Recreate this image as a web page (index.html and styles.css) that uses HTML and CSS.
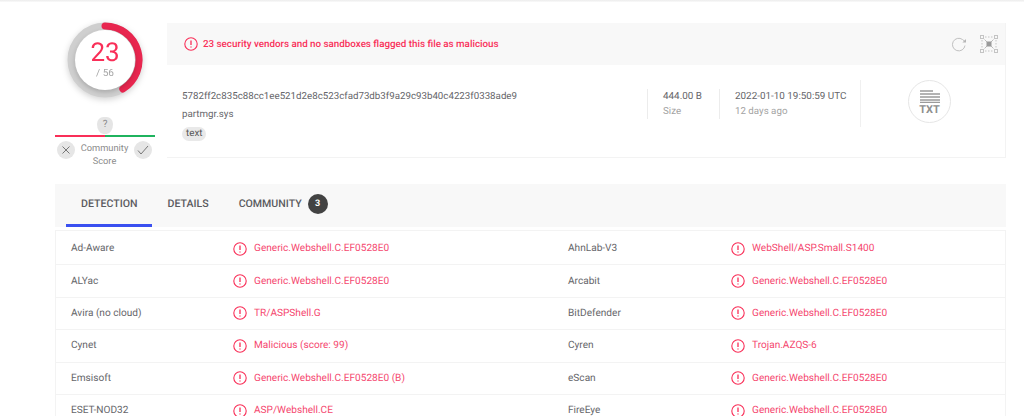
FILE: index.html
```html
<!DOCTYPE html>
<html lang="en">
<head>
<meta charset="utf-8">
<title>Detection report</title>
<link rel="stylesheet" href="styles.css">
</head>
<body>
<div class="topline"></div>
<main class="page">
  <section class="summary">
    <aside class="score-col">
      <div class="gauge">
        <svg class="gauge-ring" width="76" height="76" viewBox="0 0 76 76">
          <circle cx="38" cy="38" r="34" fill="none" stroke="#cfcfcf" stroke-width="7"/>
          <path d="M38 4A34 34 0 0 1 55.8 67" fill="none" stroke="#e8264f" stroke-width="7" stroke-linecap="round"/>
        </svg>
        <div class="gauge-face">
          <span class="gauge-num">23</span>
          <span class="gauge-total">/ 56</span>
        </div>
      </div>
      <div class="pin">?</div>
      <div class="score-line"></div>
      <div class="community">
        <span class="vote"><svg width="10" height="10" viewBox="0 0 10 10"><path d="M1.5 1.5l7 7M8.5 1.5l-7 7" stroke="#777" stroke-width="1" fill="none"/></svg></span>
        <span class="community-label">Community<br>Score</span>
        <span class="vote"><svg width="12" height="10" viewBox="0 0 12 10"><path d="M1 5.5l3 3.5 7-8" stroke="#777" stroke-width="1" fill="none"/></svg></span>
      </div>
    </aside>
    <div class="card">
      <div class="banner">
        <svg class="alert" width="14" height="14" viewBox="0 0 14 14"><circle cx="7" cy="7" r="6.2" fill="none" stroke="#f92f58" stroke-width="1.1"/><path d="M7 3.5v4.4M7 9.4v1.2" stroke="#f92f58" stroke-width="1.3" fill="none"/></svg>
        <span class="banner-text">23 security vendors and no sandboxes flagged this file as malicious</span>
        <span class="banner-tools">
          <svg width="16" height="16" viewBox="0 0 16 16"><path d="M14 9.5A6.3 6.3 0 1 1 11.5 3.5l2.5 2" fill="none" stroke="#c0c0c0" stroke-width="1"/><path d="M15 3v3.6h-3.6z" fill="#b5b5b5"/></svg>
          <svg width="18" height="18" viewBox="0 0 18 18"><g fill="none" stroke="#c4c4c4" stroke-width="1"><rect x="0.5" y="0.5" width="3" height="3"/><rect x="14.5" y="0.5" width="3" height="3"/><rect x="0.5" y="14.5" width="3" height="3"/><rect x="14.5" y="14.5" width="3" height="3"/><path d="M5 2h8M5 16h8M2 5v8M16 5v8" stroke-dasharray="1.5 1.5"/></g><path d="M4.5 4.5l9 9M13.5 4.5l-9 9" stroke="#bdbdbd" stroke-width="1"/><rect x="6.5" y="6.5" width="5" height="5" fill="#9a9a9a"/></svg>
        </span>
      </div>
      <div class="file-info">
        <div class="file-main">
          <div class="hash">5782ff2c835c88cc1ee521d2e8c523cfad73db3f9a29c93b40c4223f0338ade9</div>
          <div class="filename">partmgr.sys</div>
          <span class="tag">text</span>
        </div>
        <div class="meta meta-size">
          <div class="meta-value">444.00 B</div>
          <div class="meta-label">Size</div>
        </div>
        <div class="meta meta-date">
          <div class="meta-value">2022-01-10 19:50:59 UTC</div>
          <div class="meta-label">12 days ago</div>
        </div>
        <div class="filetype">
          <div class="type-circle">
            <svg width="20" height="13" viewBox="0 0 20 13"><path d="M0 1h13M0 4h20M0 7h20M0 10h20M0 12.5h20" stroke="#9b9b9b" stroke-width="1.6" fill="none"/></svg>
            <span class="type-label">TXT</span>
          </div>
        </div>
      </div>
    </div>
  </section>

  <nav class="tabs">
    <a class="tab tab-active">DETECTION</a>
    <a class="tab">DETAILS</a>
    <a class="tab">COMMUNITY<span class="badge">3</span></a>
  </nav>

  <section class="results">
    <div class="row">
      <div class="vendor">Ad-Aware</div>
      <div class="verdict"><svg class="alert" width="14" height="14" viewBox="0 0 14 14"><circle cx="7" cy="7" r="6.2" fill="none" stroke="#f92f58" stroke-width="1.1"/><path d="M7 3.5v4.4M7 9.4v1.2" stroke="#f92f58" stroke-width="1.3" fill="none"/></svg>Generic.Webshell.C.EF0528E0</div>
      <div class="vendor">AhnLab-V3</div>
      <div class="verdict"><svg class="alert" width="14" height="14" viewBox="0 0 14 14"><circle cx="7" cy="7" r="6.2" fill="none" stroke="#f92f58" stroke-width="1.1"/><path d="M7 3.5v4.4M7 9.4v1.2" stroke="#f92f58" stroke-width="1.3" fill="none"/></svg>WebShell/ASP.Small.S1400</div>
    </div>
    <div class="row">
      <div class="vendor">ALYac</div>
      <div class="verdict"><svg class="alert" width="14" height="14" viewBox="0 0 14 14"><circle cx="7" cy="7" r="6.2" fill="none" stroke="#f92f58" stroke-width="1.1"/><path d="M7 3.5v4.4M7 9.4v1.2" stroke="#f92f58" stroke-width="1.3" fill="none"/></svg>Generic.Webshell.C.EF0528E0</div>
      <div class="vendor">Arcabit</div>
      <div class="verdict"><svg class="alert" width="14" height="14" viewBox="0 0 14 14"><circle cx="7" cy="7" r="6.2" fill="none" stroke="#f92f58" stroke-width="1.1"/><path d="M7 3.5v4.4M7 9.4v1.2" stroke="#f92f58" stroke-width="1.3" fill="none"/></svg>Generic.Webshell.C.EF0528E0</div>
    </div>
    <div class="row">
      <div class="vendor">Avira (no cloud)</div>
      <div class="verdict"><svg class="alert" width="14" height="14" viewBox="0 0 14 14"><circle cx="7" cy="7" r="6.2" fill="none" stroke="#f92f58" stroke-width="1.1"/><path d="M7 3.5v4.4M7 9.4v1.2" stroke="#f92f58" stroke-width="1.3" fill="none"/></svg>TR/ASPShell.G</div>
      <div class="vendor">BitDefender</div>
      <div class="verdict"><svg class="alert" width="14" height="14" viewBox="0 0 14 14"><circle cx="7" cy="7" r="6.2" fill="none" stroke="#f92f58" stroke-width="1.1"/><path d="M7 3.5v4.4M7 9.4v1.2" stroke="#f92f58" stroke-width="1.3" fill="none"/></svg>Generic.Webshell.C.EF0528E0</div>
    </div>
    <div class="row">
      <div class="vendor">Cynet</div>
      <div class="verdict"><svg class="alert" width="14" height="14" viewBox="0 0 14 14"><circle cx="7" cy="7" r="6.2" fill="none" stroke="#f92f58" stroke-width="1.1"/><path d="M7 3.5v4.4M7 9.4v1.2" stroke="#f92f58" stroke-width="1.3" fill="none"/></svg>Malicious (score: 99)</div>
      <div class="vendor">Cyren</div>
      <div class="verdict"><svg class="alert" width="14" height="14" viewBox="0 0 14 14"><circle cx="7" cy="7" r="6.2" fill="none" stroke="#f92f58" stroke-width="1.1"/><path d="M7 3.5v4.4M7 9.4v1.2" stroke="#f92f58" stroke-width="1.3" fill="none"/></svg>Trojan.AZQS-6</div>
    </div>
    <div class="row">
      <div class="vendor">Emsisoft</div>
      <div class="verdict"><svg class="alert" width="14" height="14" viewBox="0 0 14 14"><circle cx="7" cy="7" r="6.2" fill="none" stroke="#f92f58" stroke-width="1.1"/><path d="M7 3.5v4.4M7 9.4v1.2" stroke="#f92f58" stroke-width="1.3" fill="none"/></svg>Generic.Webshell.C.EF0528E0 (B)</div>
      <div class="vendor">eScan</div>
      <div class="verdict"><svg class="alert" width="14" height="14" viewBox="0 0 14 14"><circle cx="7" cy="7" r="6.2" fill="none" stroke="#f92f58" stroke-width="1.1"/><path d="M7 3.5v4.4M7 9.4v1.2" stroke="#f92f58" stroke-width="1.3" fill="none"/></svg>Generic.Webshell.C.EF0528E0</div>
    </div>
    <div class="row">
      <div class="vendor">ESET-NOD32</div>
      <div class="verdict"><svg class="alert" width="14" height="14" viewBox="0 0 14 14"><circle cx="7" cy="7" r="6.2" fill="none" stroke="#f92f58" stroke-width="1.1"/><path d="M7 3.5v4.4M7 9.4v1.2" stroke="#f92f58" stroke-width="1.3" fill="none"/></svg>ASP/Webshell.CE</div>
      <div class="vendor">FireEye</div>
      <div class="verdict"><svg class="alert" width="14" height="14" viewBox="0 0 14 14"><circle cx="7" cy="7" r="6.2" fill="none" stroke="#f92f58" stroke-width="1.1"/><path d="M7 3.5v4.4M7 9.4v1.2" stroke="#f92f58" stroke-width="1.3" fill="none"/></svg>Generic.Webshell.C.EF0528E0</div>
    </div>
  </section>
</main>
</body>
</html>
```
FILE: styles.css
```css
* { box-sizing: border-box; }
html, body { margin: 0; height: 416px; overflow: hidden; background: #fff; }
body { font-family: "Roboto", "Inter", sans-serif; font-size: 10.5px; color: #66666a; text-rendering: geometricPrecision; }
.topline { height: 2px; background: linear-gradient(#ececec, #fafafa); }
.page { width: 951px; margin-left: 55px; padding-top: 21px; }
.summary { display: flex; gap: 12px; height: 161px; }
.score-col { width: 100px; display: flex; flex-direction: column; align-items: center; }
.gauge { position: relative; flex: none; width: 76px; height: 76px; margin-top: -1px; border-radius: 50%; filter: drop-shadow(0 2px 3px rgba(0,0,0,.18)); }
.gauge-ring { position: absolute; inset: 0; }
.gauge-face { position: absolute; left: 8px; top: 8px; width: 60px; height: 60px; border-radius: 50%; background: #fff; box-shadow: 0 2px 5px rgba(0,0,0,.2); display: flex; flex-direction: column; align-items: center; }
.gauge-num { font-weight: 400; font-size: 26px; line-height: 28px; margin-top: 9px; color: #f92f58; }
.gauge-total { font-size: 10px; line-height: 12px; margin-top: 1px; color: #a5a5a5; }
.pin { flex: none; width: 16px; height: 17px; margin-top: 19px; border-radius: 50% 50% 50% 50% / 50% 50% 75% 75%; background: #e5e5e5; color: #8a8a8a; font-size: 10px; line-height: 16px; text-align: center; }
.score-line { width: 100px; height: 2px; margin-top: 1px; flex: none; background: linear-gradient(90deg, #f92f58 50%, #1fb35e 50%); }
.community { width: 100%; display: flex; justify-content: space-between; align-items: flex-start; padding: 3px 3px 0 2px; }
.community-label { font-size: 9.3px; line-height: 13px; color: #8b8b8b; text-align: center; margin-top: 2px; }
.vote { width: 18px; height: 18px; margin-top: 1px; border-radius: 50%; background: #e6e6e6; display: flex; align-items: center; justify-content: center; }
.card { flex: 1; height: 135px; border-bottom: 1px solid #f3f3f3; border-right: 1px solid #f3f3f3; }
.banner { height: 42px; background: #f8f8f8; display: flex; align-items: center; padding: 0 7px 0 17px; gap: 5px; }
.alert { flex: none; }
.banner-text { color: #f92f58; font-weight: 500; font-size: 9.8px; }
.banner-tools { margin-left: auto; display: flex; align-items: center; gap: 13px; }
.file-info { display: flex; align-items: flex-start; padding: 15px 0 0 15px; }
.file-main { width: 465px; }
.hash { font-size: 9.74px; line-height: 13px; margin-top: 10px; }
.filename { font-size: 9.74px; line-height: 13px; margin-top: 5px; }
.tag { display: inline-block; margin-top: 6px; padding: 0 4px; height: 14px; line-height: 14px; border-radius: 7px; background: #e9e9e9; font-size: 9.8px; color: #555; }
.meta { height: 30px; margin-top: 9px; border-left: 1px solid #ececec; padding-left: 15px; }
.meta-size { width: 72px; }
.meta-date { width: 141px; }
.meta-value { font-size: 9.9px; line-height: 13px; margin-top: 1px; }
.meta-label { font-size: 9.74px; line-height: 13px; margin-top: 2px; color: #a3a3a3; }
.filetype { border-left: 1px solid #f0f0f0; height: 47px; padding-left: 47px; }
.type-circle { width: 43px; height: 43px; border: 1px solid #e6e6e6; border-radius: 50%; display: flex; flex-direction: column; align-items: center; padding-top: 9px; }
.type-label { font-size: 11px; line-height: 12px; font-weight: 700; color: #8f8f8f; margin-top: 1px; }
.tabs { height: 43px; background: #f8f8f8; display: flex; padding-left: 11px; }
.tab { position: relative; height: 43px; padding: 0 15px 4px; display: flex; align-items: center; font-size: 10.6px; font-weight: 500; color: #5b5b5f; }
.tab-active::after { content: ""; position: absolute; left: 0; right: 0; bottom: 0; height: 3px; background: #3a50f0; }
.badge { width: 20px; height: 20px; margin-left: 6px; border-radius: 50%; background: #434343; color: #fff; font-size: 9px; font-weight: 700; display: flex; align-items: center; justify-content: center; }
.results { margin-top: 3px; padding-top: 2px; border-left: 1px solid #f3f3f3; border-right: 1px solid #f3f3f3; border-top: 1px solid #f3f3f3; }
.row { display: grid; grid-template-columns: 177px 320px 178px 1fr; align-items: center; height: 32.4px; border-bottom: 1px solid #f3f3f3; }
.vendor { padding-left: 15px; font-size: 10.1px; }
.verdict { display: flex; align-items: center; gap: 7px; color: #f5486f; font-size: 10.1px; }
```
